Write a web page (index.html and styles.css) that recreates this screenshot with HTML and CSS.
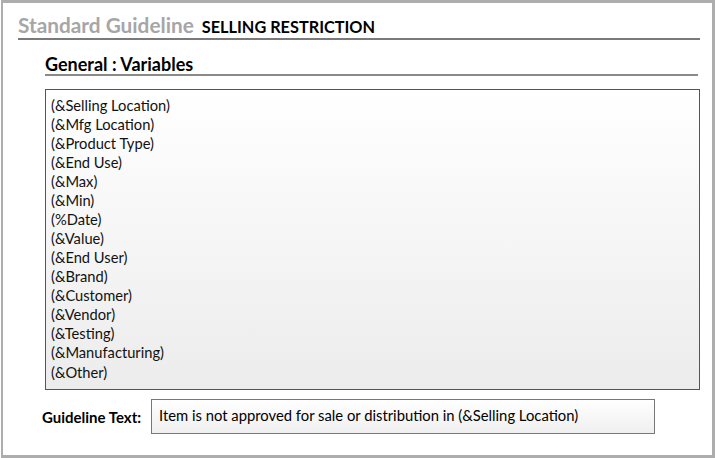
FILE: index.html
```html
<!DOCTYPE html>
<html lang="en">
<head>
  <meta charset="UTF-8">
  <title>Standard Guideline — Selling Restriction</title>
  <link rel="stylesheet" href="styles.css">
</head>
<body>
  <div class="page">
    <div class="title-row">
      <span class="title-main">Standard Guideline</span>
      <span class="title-sub">SELLING RESTRICTION</span>
    </div>

    <div class="section">
      <h2 class="section-title">General : Variables</h2>
      <div class="var-box">
        <div class="var">(&amp;Selling Location)</div>
        <div class="var">(&amp;Mfg Location)</div>
        <div class="var">(&amp;Product Type)</div>
        <div class="var">(&amp;End Use)</div>
        <div class="var">(&amp;Max)</div>
        <div class="var">(&amp;Min)</div>
        <div class="var">(%Date)</div>
        <div class="var">(&amp;Value)</div>
        <div class="var">(&amp;End User)</div>
        <div class="var">(&amp;Brand)</div>
        <div class="var">(&amp;Customer)</div>
        <div class="var">(&amp;Vendor)</div>
        <div class="var">(&amp;Testing)</div>
        <div class="var">(&amp;Manufacturing)</div>
        <div class="var var-last">(&amp;Other)</div>
      </div>
    </div>

    <div class="guideline-row">
      <span class="guideline-label">Guideline Text:</span>
      <div class="guideline-input">Item is not approved for sale or distribution in (&amp;Selling Location)</div>
    </div>
  </div>
</body>
</html>
```

FILE: styles.css
```css
body {
  margin: 0;
  background: #fff;
  font-family: Lato, "Open Sans", sans-serif;
  color: #000;
}

.page {
  width: 714px;
  height: 458px;
  box-sizing: border-box;
  border: 3px solid #adadad;
  border-left-width: 2px;
  margin-left: 1px;
  padding: 8px 12px 0 15px;
}

.title-row {
  display: flex;
  align-items: baseline;
  gap: 8px;
  height: 29px;
  border-bottom: 2px solid #7a7a7a;
  box-sizing: border-box;
  padding-top: 1px;
}

.title-main {
  color: #a6a6a6;
  font-size: 20.8px;
  font-weight: bold;
}

.title-sub {
  font-size: 16.3px;
  font-weight: bold;
}

.section {
  margin: 0 2px 0 27px;
}

.section-title {
  margin: 0;
  font-size: 18px;
  font-weight: bold;
  height: 36px;
  box-sizing: border-box;
  padding-top: 13px;
  border-bottom: 2px solid #8a8a8a;
}

.var-box {
  margin-top: 13px;
  height: 301px;
  box-sizing: border-box;
  border: 1px solid #555;
  background: linear-gradient(to bottom, #ffffff, #ececec);
  padding: 6px 0 0 5px;
  margin-right: -2px;
}

.var {
  font-size: 14.7px;
  line-height: 19px;
  color: #111;
}

.var-last {
  margin-top: 1px;
}

.guideline-row {
  display: flex;
  align-items: center;
  margin-top: 9px;
}

.guideline-label {
  font-size: 15px;
  font-weight: bold;
  margin-left: 24px;
  width: 109px;
}

.guideline-input {
  width: 504px;
  height: 35px;
  box-sizing: border-box;
  border: 1px solid #777;
  background: linear-gradient(to bottom, #ffffff, #efefef);
  font-size: 14.8px;
  padding: 6px 0 0 7px;
}
```
